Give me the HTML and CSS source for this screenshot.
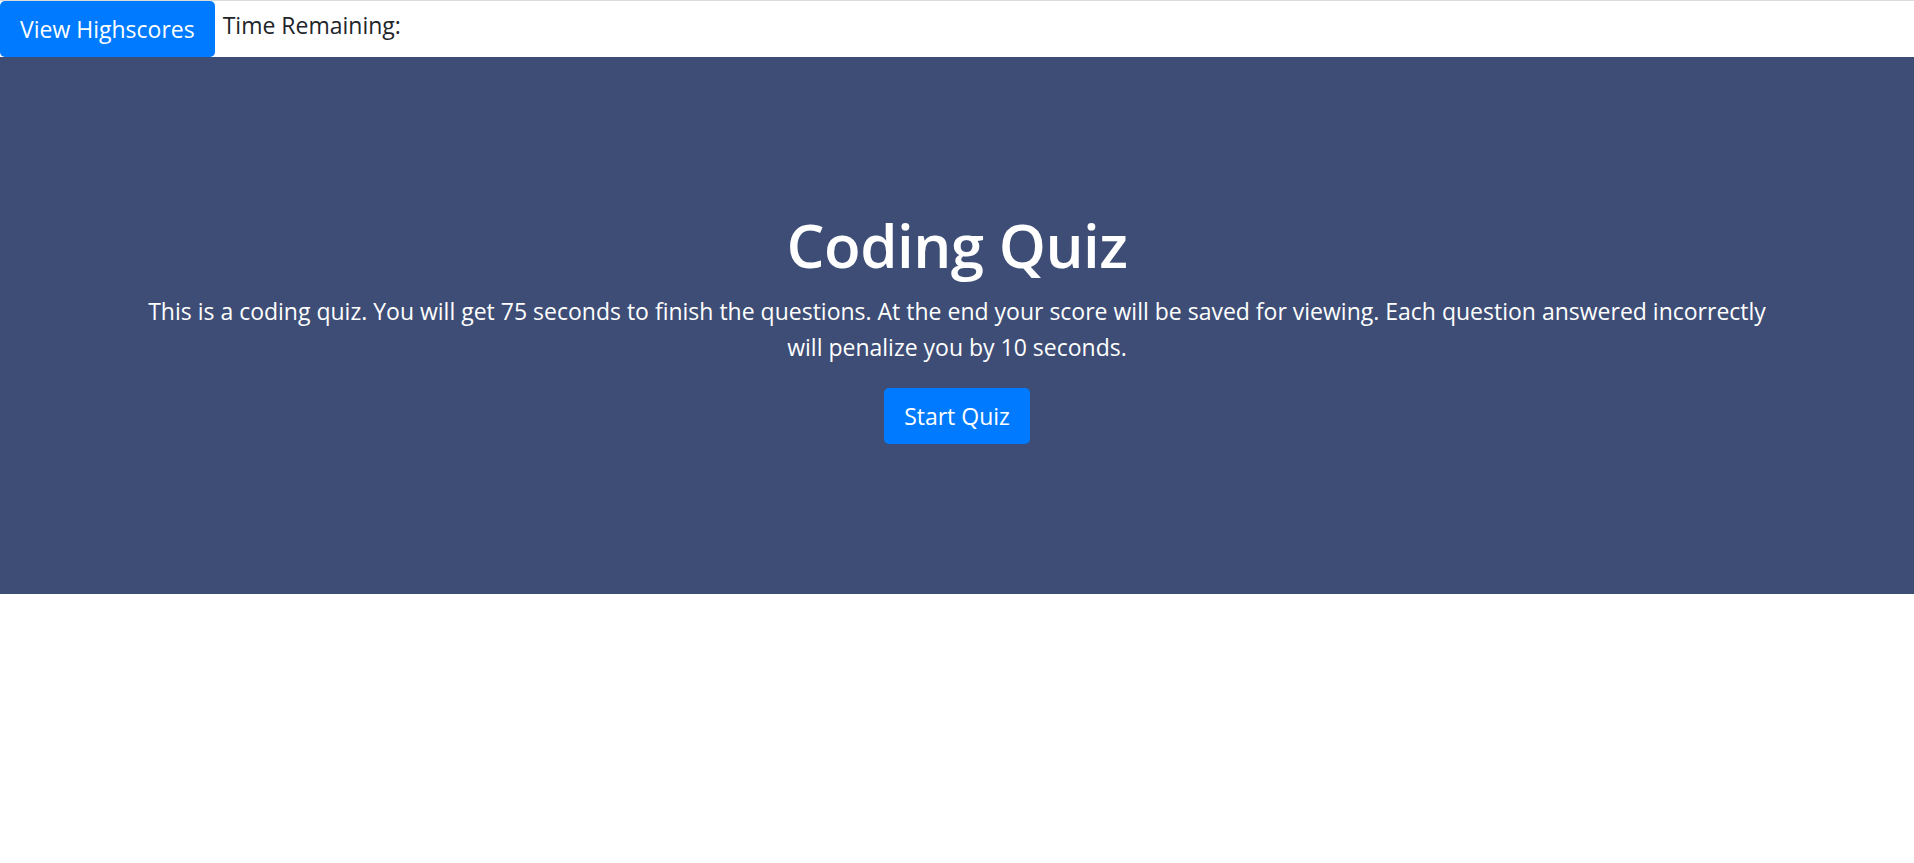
FILE: index.html
```html
<!DOCTYPE html>
<html lang="en">
<head>
<meta charset="utf-8">
<title>Coding Quiz</title>
<link rel="stylesheet" href="styles.css">
</head>
<body>
<header class="topbar">
  <button class="btn btn-highscores">View Highscores</button>
  <span class="timer">Time Remaining:</span>
</header>
<main class="hero">
  <div class="hero-content">
    <h1 class="hero-title">Coding Quiz</h1>
    <p class="hero-text">This is a coding quiz. You will get 75 seconds to finish the questions. At the end your score will be saved for viewing. Each question answered incorrectly will penalize you by 10 seconds.</p>
    <button class="btn btn-start">Start Quiz</button>
  </div>
</main>
</body>
</html>
```
FILE: styles.css
```css
* { box-sizing: border-box; }
html, body { margin: 0; padding: 0; }
body {
  font-family: "Open Sans", "Noto Sans", sans-serif;
  font-size: 23px;
  line-height: 36px;
  color: #212529;
  background: #fff;
}
.topbar {
  display: flex;
  align-items: flex-start;
  gap: 8px;
  border-top: 1px solid #dcdcdc;
}
.btn {
  font-family: inherit;
  font-size: 23px;
  line-height: 36px;
  padding: 10px 20px;
  border: none;
  border-radius: 5px;
  background: #007bff;
  color: #fff;
  cursor: pointer;
}
.timer {
  padding-top: 6px;
}
.hero {
  height: 537px;
  background: #3d4d75;
  color: #fff;
  display: flex;
  justify-content: center;
  align-items: center;
  text-align: center;
  padding: 0 100px;
}
.hero-content {
  display: flex;
  flex-direction: column;
  align-items: center;
}
.hero-title {
  margin: 0 0 9px;
  font-size: 60px;
  line-height: 77px;
  font-weight: 600;
  letter-spacing: -0.5px;
}
.hero-text {
  margin: 0 0 23px;
  max-width: 1625px;
}
```
